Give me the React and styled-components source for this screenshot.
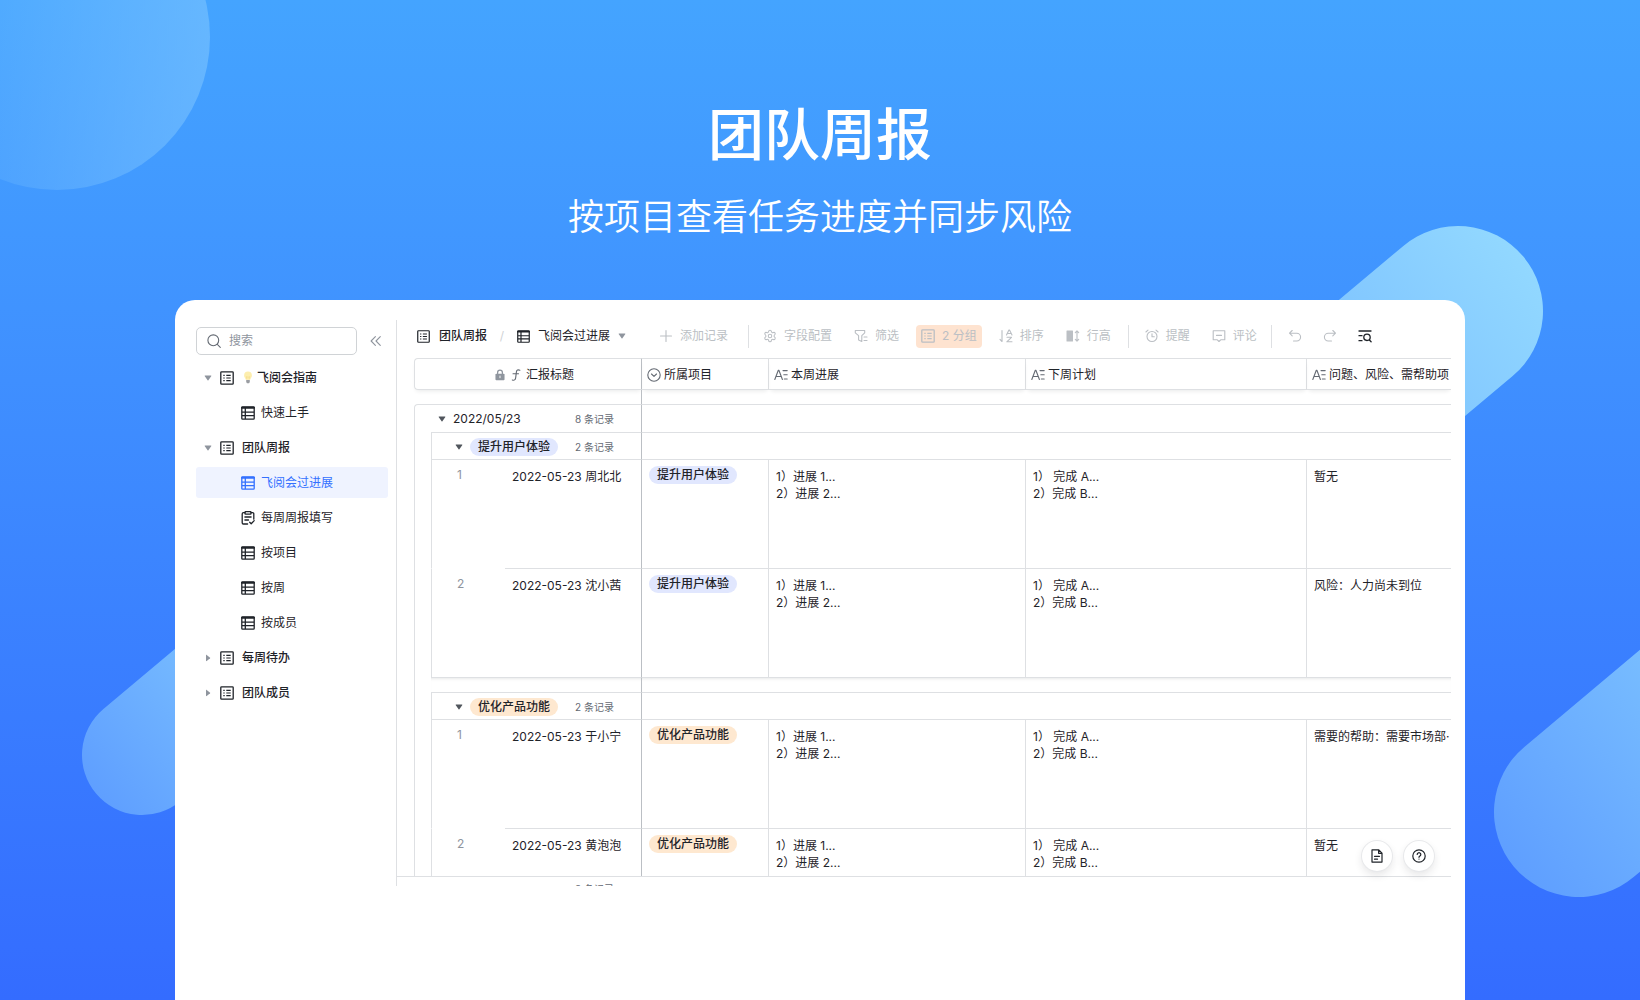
import React, { useState } from 'react'
import styled, { createGlobalStyle, css } from 'styled-components'
import { Settings } from 'lucide-react'

const GlobalStyle = createGlobalStyle`
  * { box-sizing: border-box; }
  body {
    margin: 0;
    font-family: Inter, "Noto Sans CJK SC", sans-serif;
    font-size: 12px;
    line-height: 16px;
    color: #1f2329;
  }
  button, input { font: inherit; color: inherit; }
  button { padding: 0; border: 0; background: none; cursor: pointer; }
`

const Page = styled.div`
  position: relative;
  display: flex;
  flex-direction: column;
  min-height: 100vh;
  overflow: hidden;
  background: linear-gradient(180deg, #44a4ff 0%, #3f8fff 38%, #346cff 100%);
`

const Backdrop = styled.svg`
  position: absolute;
  inset: 0;
  width: 100%;
  height: 100%;
`

const Hero = styled.header`
  position: relative;
  height: 300px;
  padding-top: 95px;
  text-align: center;
  color: #fff;
`

const HeroTitle = styled.h1`
  margin: 0;
  font-size: 56px;
  line-height: 80px;
  font-weight: 500;
`

const HeroText = styled.p`
  margin: 14px 0 0;
  font-size: 36px;
  line-height: 56px;
  font-weight: 350;
`

const Card = styled.main`
  position: relative;
  flex: 1;
  margin: 0 175px;
  padding: 20px 14px 0 21px;
  border-radius: 20px 20px 0 0;
  background: #fff;
`

const Workspace = styled.div`
  display: flex;
`

const Sidebar = styled.aside`
  flex: none;
  width: 201px;
  padding: 7px 8px 0 0;
  border-right: 1px solid #dee0e3;
`

const SearchRow = styled.div`
  display: flex;
  align-items: center;
  justify-content: space-between;
  padding-right: 6px;
  margin-bottom: 7px;
`

const SearchBox = styled.label`
  display: flex;
  align-items: center;
  gap: 8px;
  width: 161px;
  height: 28px;
  padding: 0 10px;
  border: 1px solid #d0d3d6;
  border-radius: 5px;
  color: #646a73;
`

const SearchInput = styled.input`
  flex: 1;
  min-width: 0;
  padding: 0;
  border: 0;
  outline: none;
  background: none;
  &::placeholder { color: #8f959e; opacity: 1; }
`

const IconButton = styled.button`
  display: flex;
  color: ${p => p.$color || '#8f959e'};
`

const Tree = styled.nav`
  display: flex;
  flex-direction: column;
  gap: 4px;
`

const TreeItem = styled.a`
  display: flex;
  align-items: center;
  height: 31px;
  padding-left: ${p => (p.$child ? 45 : 8)}px;
  border-radius: 3px;
  text-decoration: none;
  color: #1f2329;
  font-weight: ${p => (p.$child ? 400 : 500)};
  svg { flex: none; }
  ${p => p.$active && css`
    color: #3370ff;
    background: #eff3ff;
  `}
`

const TreeLabel = styled.span`
  display: flex;
  align-items: center;
  gap: 3px;
  margin-left: ${p => (p.$child ? 6 : 8)}px;
`

const CaretBox = styled.span`
  display: flex;
  width: 16px;
  color: #8f959e;
`

const Content = styled.section`
  flex: 1;
  min-width: 0;
`

const Toolbar = styled.div`
  display: flex;
  align-items: center;
  height: 32px;
  padding-left: 20px;
  white-space: nowrap;
`

const Crumb = styled.button`
  display: flex;
  align-items: center;
  gap: ${p => (p.$strong ? 9 : 8)}px;
  font-weight: ${p => (p.$strong ? 500 : 400)};
`

const CrumbCaret = styled.span`
  display: flex;
  color: #8f959e;
`

const Slash = styled.span`
  width: 30px;
  text-align: center;
  color: #d0d3d6;
`

const Tools = styled.div`
  display: flex;
  align-items: center;
  gap: ${p => p.$gap || 12}px;
  margin-left: ${p => p.$offset}px;
`

const Tool = styled.button`
  display: flex;
  align-items: center;
  gap: 7px;
  height: 23px;
  padding: 0 5px;
  border-radius: 4px;
  color: #bbbfc4;
  ${p => p.$active && css`background: #fee3d0;`}
`

const Divider = styled.span`
  width: 1px;
  height: 23px;
  margin-left: ${p => p.$offset}px;
  background: #dee0e3;
`

const Viewport = styled.div`
  height: 524px;
  padding: 6px 0 0 17px;
  overflow: hidden;
`

const Grid = styled.table`
  width: 100%;
  table-layout: fixed;
  border-collapse: separate;
  border-spacing: 0;
`

const HeadCell = styled.th`
  height: 32px;
  padding: 1px 0 0 5px;
  border-top: 1px solid #dee0e3;
  border-bottom: 1px solid #dee0e3;
  border-right: ${p => (p.$last ? 0 : 1)}px solid ${p => (p.$frozen ? '#bbbfc4' : '#dee0e3')};
  box-shadow: 0 3px 4px -2px rgba(31, 35, 41, 0.1);
  font-weight: 400;
  text-align: left;
  white-space: nowrap;
  overflow: hidden;
  ${p => p.$frozen && css`
    padding: 1px 0 0 79px;
    border-left: 1px solid #dee0e3;
    border-top-left-radius: 4px;
    border-bottom-left-radius: 4px;
  `}
`

const HeadLabel = styled.span`
  display: flex;
  align-items: center;
  gap: ${p => p.$gap || 3}px;
  color: #1f2329;
  svg { flex: none; color: #646a73; }
`

const Indent = styled.td`
  padding: 0;
  border-left: 1px solid #dee0e3;
`

const Gap = styled.td`
  height: 14px;
  padding: 0;
  ${p => p.$frozen && css`border-right: 1px solid #bbbfc4;`}
  ${p => p.$shadow && css`box-shadow: inset 0 3px 3px -2px rgba(31, 35, 41, 0.1);`}
`

const GroupCell = styled.td`
  height: ${p => p.$height}px;
  padding: ${p => p.$top || 0}px 0 0 ${p => p.$pad || 0}px;
  border-top: 1px solid #dee0e3;
  ${p => p.$frozen && css`
    border-right: 1px solid #bbbfc4;
    border-left: 1px solid #dee0e3;
  `}
  ${p => p.$rounded && css`border-top-left-radius: 4px;`}
`

const GroupHead = styled.div`
  display: flex;
  align-items: center;
  padding-right: 27px;
  svg { margin-right: 7px; color: #51565d; }
`

const Count = styled.span`
  margin-left: auto;
  font-size: 10px;
  color: #646a73;
`

const Tag = styled.span`
  display: inline-block;
  height: 18px;
  padding: 0 8px;
  border-radius: 9px;
  line-height: 18px;
  font-weight: 500;
  background: ${p => p.$color};
`

const Cell = styled.td`
  height: ${p => (p.$closing ? 110 : 109)}px;
  padding: 8px 0 0 7px;
  border-top: 1px solid #dee0e3;
  border-right: ${p => (p.$last ? 0 : 1)}px solid ${p => (p.$frozen ? '#bbbfc4' : '#dee0e3')};
  border-bottom: ${p => (p.$closing ? 1 : 0)}px solid #dee0e3;
  vertical-align: top;
  line-height: 17px;
  white-space: pre;
  overflow: hidden;
`

const TagCell = styled(Cell)`
  padding-top: 6px;
`

const NumberCell = styled(Cell)`
  padding: 6px 0 0 25px;
  border-right: 0;
  border-left: 1px solid #dee0e3;
  ${p => !p.$first && css`border-top-color: transparent;`}
  color: #8f959e;
`

const Footer = styled.footer`
  height: 10px;
  padding: 5px 0 0 178px;
  border-top: 1px solid #dee0e3;
  overflow: hidden;
  font-size: 10px;
  line-height: 14px;
  color: #646a73;
`

const Floating = styled.div`
  position: absolute;
  top: 541px;
  right: 31px;
  display: flex;
  gap: 12px;
`

const RoundButton = styled.button`
  display: flex;
  align-items: center;
  justify-content: center;
  width: 30px;
  height: 30px;
  border-radius: 50%;
  background: #fff;
  box-shadow: 0 0 0 1px #e8e9eb, 0 4px 8px rgba(31, 35, 41, 0.12);
`

const Icon = ({ size = 14, children }) => (
  <svg width={size} height={size} viewBox="0 0 14 14" fill="none" stroke="currentColor"
    strokeWidth="1.1" strokeLinecap="round" strokeLinejoin="round" aria-hidden="true">
    {children}
  </svg>
)

const BaseIcon = ({ size }) => (
  <Icon size={size}>
    <rect x="0.8" y="0.8" width="12.4" height="12.4" rx="0.8" strokeWidth="1.3" />
    <path d="M3.3 4.3h1.4M3.3 7h1.4M3.3 9.7h1.4M6.3 4.3h4.4M6.3 7h4.4M6.3 9.7h4.4" strokeLinecap="butt" strokeWidth="1.2" />
  </Icon>
)

const GridIcon = ({ size }) => (
  <Icon size={size}>
    <rect x="0.8" y="0.8" width="12.4" height="12.4" rx="0.8" strokeWidth="1.3" />
    <path d="M1 1.8h12" strokeWidth="2" />
    <path d="M4.3 2v11M1 6.2h12M1 9.6h12" strokeLinecap="butt" strokeWidth="1.3" />
  </Icon>
)

const FormIcon = () => (
  <Icon>
    <path d="M4 1.7H2.4A1.2 1.2 0 0 0 1.2 2.9v8.9A1.2 1.2 0 0 0 2.4 13h4.2M10 1.7h1.6a1.2 1.2 0 0 1 1.2 1.2v5.3" strokeWidth="1.3" />
    <rect x="4" y="0.7" width="6" height="2.4" rx="0.6" strokeWidth="1.3" />
    <path d="M3.9 6h6.2M3.9 9h3.6M8.7 11.2l1.5 1.6 3-3.2" strokeWidth="1.3" />
  </Icon>
)

const SearchIcon = () => (
  <Icon><circle cx="6.3" cy="6.3" r="5.4" /><path d="M10.3 10.3l3 3" /></Icon>
)

const CollapseIcon = () => (
  <Icon size={12}><path d="M6.3 2L1.3 7l5 5M12 2L7 7l5 5" strokeWidth="1.3" /></Icon>
)

const Caret = ({ closed }) => (
  <svg width="8" height="8" viewBox="0 0 8 8" fill="currentColor" aria-hidden="true">
    {closed
      ? <path d="M2 1.2v5.6c0 .4.4.5.7.3l3.4-2.800c.2-.2.2-.4 0-.6L2.700.9C2.400.7 2 .8 2 1.200z" />
      : <path d="M1.200 1.500h5.600c.5 0 .7.500.4.800L4.400 6.300c-.2.300-.6.300-.8 0L.8 2.300c-.3-.300-.1-.800.4-.800z" />}
  </svg>
)

const BulbIcon = () => (
  <svg width="12" height="13" viewBox="0 0 12 13" aria-hidden="true">
    <path d="M6 .6a3.900 3.900 0 0 0-3.900 3.900c0 1.700 1.100 2.500 1.700 4.200h4.400c.6-1.700 1.700-2.500 1.700-4.200A3.900 3.900 0 0 0 6 .6z" fill="#fdeeae" />
    <path d="M5 8.600l-.6-3 1.600.7 1.600-.7-.6 3" fill="none" stroke="#f3d984" strokeWidth=".6" />
    <path d="M4.200 8.900h3.600v2.200L7 12.300H5l-.8-1.200z" fill="#9a9da2" />
  </svg>
)

const PlusIcon = () => <Icon><path d="M7 1.500v11M1.500 7h11" /></Icon>

const FilterIcon = () => (
  <Icon>
    <path d="M1.300 1.500h9.400v2.300L7.800 6.700v5.800L4.600 11V6.700L1.300 3.800z" />
    <path d="M10 8h3M10 11.500h3" />
  </Icon>
)

const SortIcon = () => (
  <Icon>
    <path d="M3 1.500v11M3 12.500L1 10.400M7.500 6l2.400-5h.6L13 6M8.400 4.500h3.800M8 8.300h4.500l-4.700 4.500H13" />
  </Icon>
)

const RowHeightIcon = () => (
  <Icon>
    <rect x="0.500" y="1.500" width="6.500" height="11" rx="0.500" fill="currentColor" stroke="none" />
    <path d="M11 2v10M9.300 3.600L11 1.800l1.700 1.800M9.300 10.400l1.700 1.800 1.700-1.800" />
  </Icon>
)

const AlarmIcon = () => (
  <Icon>
    <circle cx="7" cy="7.500" r="5" />
    <path d="M7 4.800v3h2.300M.9 3L3 1.100M13.100 3L11 1.100" />
  </Icon>
)

const CommentIcon = () => (
  <Icon><path d="M1.200 1.800h11.600v9H8.700L7 12.500l-1.700-1.700H1.200zM4.500 6.400h5" /></Icon>
)

const UndoIcon = () => (
  <Icon><path d="M4.200 1.500L1.500 4.200l2.700 2.700M1.700 4.200h7a3.900 3.900 0 0 1 0 7.800H5.500" /></Icon>
)

const RedoIcon = () => (
  <Icon><path d="M9.800 1.500l2.700 2.700-2.700 2.700M12.300 4.200h-7a3.900 3.900 0 0 0 0 7.800h3.200" /></Icon>
)

const FindIcon = () => (
  <Icon>
    <path d="M1 2h12M1 6.700h3M1 11.700h3M11.400 11l1.700 1.700" strokeWidth="1.300" />
    <circle cx="9" cy="8.300" r="3.200" strokeWidth="1.300" />
  </Icon>
)

const LockIcon = () => (
  <Icon size={12}>
    <rect x="1.700" y="5.500" width="10.600" height="7.500" rx="1" fill="#8f959e" stroke="none" />
    <path d="M4.200 5.500V4a2.800 2.800 0 0 1 5.600 0v1.500" stroke="#8f959e" strokeWidth="1.500" />
    <path d="M7 8.200v2" stroke="#fff" />
  </Icon>
)

const FormulaIcon = () => (
  <Icon size={12}><path d="M11.500 1.500c-2.300-1-3.700-.2-4 1.900L6.600 10.300c-.3 2.300-1.600 3.300-3.900 2.500M3.500 5.500h6.500" strokeWidth="1.300" /></Icon>
)

const SelectIcon = () => (
  <Icon><circle cx="7" cy="7" r="6.200" /><path d="M4.500 6l2.500 2.400L9.500 6" /></Icon>
)

const TextIcon = () => (
  <Icon><path d="M.8 11.500L4.300 2.300h.6l3.500 9.200M2 8.500h5.200M9 2.600h4.200M9.800 6.800h3.400M10.300 11h2.900" /></Icon>
)

const DocIcon = () => (
  <Icon>
    <path d="M2 .9h6.800L12 4.100v9H2zM8.600 1v3.300H12M4.500 7.300h5M4.500 10.200h3" strokeWidth="1.200" />
  </Icon>
)

const HelpIcon = () => (
  <Icon>
    <circle cx="7" cy="7" r="6.200" strokeWidth="1.200" />
    <path d="M5.200 5.500a1.800 1.800 0 1 1 2.700 1.600c-.6.400-.9.600-.9 1.200M7 10v.1" strokeWidth="1.200" />
  </Icon>
)

const tree = [
  { label: '飞阅会指南', bulb: true },
  { label: '快速上手', child: true },
  { label: '团队周报' },
  { label: '飞阅会过进展', child: true },
  { label: '每周周报填写', child: true, form: true },
  { label: '按项目', child: true },
  { label: '按周', child: true },
  { label: '按成员', child: true },
  { label: '每周待办', closed: true },
  { label: '团队成员', closed: true },
]

const groups = [
  {
    name: '提升用户体验',
    color: '#e1e7fe',
    rows: [
      { title: '2022-05-23 周北北', issue: '暂无' },
      { title: '2022-05-23 沈小茜', issue: '风险：人力尚未到位' },
    ],
  },
  {
    name: '优化产品功能',
    color: '#fee8d0',
    rows: [
      { title: '2022-05-23 于小宁', issue: '需要的帮助：需要市场部·' },
      { title: '2022-05-23 黄泡泡', issue: '暂无' },
    ],
  },
]

const progress = '1）进展 1...\n2）进展 2...'
const plan = '1） 完成 A...\n2）完成 B...'

const Shapes = () => (
  <Backdrop viewBox="0 0 1640 1000" preserveAspectRatio="xMidYMin slice" aria-hidden="true">
    <defs>
      <linearGradient id="disc" x1="0" y1="0.5" x2="1" y2="0.5">
        <stop offset="0.2" stopColor="#7cc4ff" stopOpacity="0.15" />
        <stop offset="1" stopColor="#7cc4ff" stopOpacity="0.6" />
      </linearGradient>
      <linearGradient id="bright" x1="1" y1="0" x2="0" y2="0">
        <stop offset="0" stopColor="#92d8ff" />
        <stop offset="1" stopColor="#6cb0ff" />
      </linearGradient>
      <linearGradient id="soft" x1="0" y1="0" x2="1" y2="0">
        <stop offset="0" stopColor="#5f9fff" />
        <stop offset="0.7" stopColor="#7cc2ff" />
      </linearGradient>
    </defs>
    <circle cx="57" cy="37" r="153" fill="url(#disc)" />
    <rect x="1143" y="226" width="400" height="170" rx="85" fill="url(#bright)" transform="rotate(-40 1458 311)" />
    <rect x="82" y="695" width="300" height="120" rx="60" fill="url(#soft)" transform="rotate(-40 142 755)" />
    <rect x="1494" y="727" width="400" height="170" rx="85" fill="url(#soft)" transform="rotate(-40 1579 812)" />
  </Backdrop>
)

function GroupRows({ group, last }) {
  return (
    <>
      <tr>
        <Indent />
        <GroupCell colSpan={2} $height={27} $pad={23} $top={1} $frozen>
          <GroupHead>
            <Caret />
            <Tag $color={group.color}>{group.name}</Tag>
            <Count>2 条记录</Count>
          </GroupHead>
        </GroupCell>
        <GroupCell colSpan={4} />
      </tr>
      {group.rows.map((row, i) => {
        const closing = !last && i === group.rows.length - 1
        return (
          <tr key={row.title}>
            <Indent />
            <NumberCell $first={i === 0} $closing={closing}>{i + 1}</NumberCell>
            <Cell $frozen $closing={closing}>{row.title}</Cell>
            <TagCell $closing={closing}><Tag $color={group.color}>{group.name}</Tag></TagCell>
            <Cell $closing={closing}>{progress}</Cell>
            <Cell $closing={closing}>{plan}</Cell>
            <Cell $last $closing={closing}>{row.issue}</Cell>
          </tr>
        )
      })}
    </>
  )
}

export default function App() {
  const [active, setActive] = useState('飞阅会过进展')
  const [query, setQuery] = useState('')

  return (
    <Page>
      <GlobalStyle />
      <Shapes />
      <Hero>
        <HeroTitle>团队周报</HeroTitle>
        <HeroText>按项目查看任务进度并同步风险</HeroText>
      </Hero>
      <Card>
        <Workspace>
          <Sidebar>
            <SearchRow>
              <SearchBox>
                <SearchIcon />
                <SearchInput
                  aria-label="搜索"
                  placeholder="搜索"
                  value={query}
                  onChange={e => setQuery(e.target.value)}
                />
              </SearchBox>
              <IconButton aria-label="收起"><CollapseIcon /></IconButton>
            </SearchRow>
            <Tree>
              {tree.map(item => (
                <TreeItem
                  key={item.label}
                  href="#"
                  $child={item.child}
                  $active={item.label === active}
                  onClick={() => setActive(item.label)}
                >
                  {!item.child && <CaretBox><Caret closed={item.closed} /></CaretBox>}
                  {!item.child && <BaseIcon />}
                  {item.child && (item.form ? <FormIcon /> : <GridIcon />)}
                  <TreeLabel $child={item.child}>
                    {item.bulb && <BulbIcon />}
                    {item.label}
                  </TreeLabel>
                </TreeItem>
              ))}
            </Tree>
          </Sidebar>
          <Content>
            <Toolbar>
              <Crumb $strong><BaseIcon size={13} />团队周报</Crumb>
              <Slash>/</Slash>
              <Crumb>
                <GridIcon size={13} />飞阅会过进展
                <CrumbCaret><Caret /></CrumbCaret>
              </Crumb>
              <Tools $offset={28}>
                <Tool><PlusIcon />添加记录</Tool>
              </Tools>
              <Divider $offset={15} />
              <Tools $offset={9}>
                <Tool><Settings size={14} strokeWidth={1.8} />字段配置</Tool>
                <Tool><FilterIcon />筛选</Tool>
                <Tool $active><BaseIcon />2 分组</Tool>
                <Tool><SortIcon />排序</Tool>
                <Tool><RowHeightIcon />行高</Tool>
              </Tools>
              <Divider $offset={12} />
              <Tools $offset={11}>
                <Tool><AlarmIcon />提醒</Tool>
                <Tool><CommentIcon />评论</Tool>
              </Tools>
              <Divider $offset={9} />
              <Tools $offset={16} $gap={21}>
                <IconButton $color="#bbbfc4" aria-label="撤销"><UndoIcon /></IconButton>
                <IconButton $color="#bbbfc4" aria-label="重做"><RedoIcon /></IconButton>
                <IconButton $color="#1f2329" aria-label="查找"><FindIcon /></IconButton>
              </Tools>
            </Toolbar>
            <Viewport>
              <Grid>
                <colgroup>
                  <col width="17" />
                  <col width="74" />
                  <col width="137" />
                  <col width="127" />
                  <col width="257" />
                  <col width="281" />
                  <col />
                </colgroup>
                <thead>
                  <tr>
                    <HeadCell colSpan={3} $frozen>
                      <HeadLabel $gap={4}><LockIcon /><FormulaIcon />汇报标题</HeadLabel>
                    </HeadCell>
                    <HeadCell><HeadLabel><SelectIcon />所属项目</HeadLabel></HeadCell>
                    <HeadCell><HeadLabel><TextIcon />本周进展</HeadLabel></HeadCell>
                    <HeadCell><HeadLabel><TextIcon />下周计划</HeadLabel></HeadCell>
                    <HeadCell $last><HeadLabel><TextIcon />问题、风险、需帮助项</HeadLabel></HeadCell>
                  </tr>
                </thead>
                <tbody>
                  <tr>
                    <Gap colSpan={3} $frozen />
                    <Gap colSpan={4} />
                  </tr>
                  <tr>
                    <GroupCell colSpan={3} $height={28} $pad={23} $frozen $rounded>
                      <GroupHead><Caret />2022/05/23<Count>8 条记录</Count></GroupHead>
                    </GroupCell>
                    <GroupCell colSpan={4} />
                  </tr>
                  <GroupRows group={groups[0]} />
                  <tr>
                    <Indent />
                    <Gap colSpan={2} $frozen $shadow />
                    <Gap colSpan={4} $shadow />
                  </tr>
                  <GroupRows group={groups[1]} last />
                </tbody>
              </Grid>
            </Viewport>
            <Footer>8 条记录</Footer>
          </Content>
        </Workspace>
        <Floating>
          <RoundButton aria-label="文档"><DocIcon /></RoundButton>
          <RoundButton aria-label="帮助"><HelpIcon /></RoundButton>
        </Floating>
      </Card>
    </Page>
  )
}
